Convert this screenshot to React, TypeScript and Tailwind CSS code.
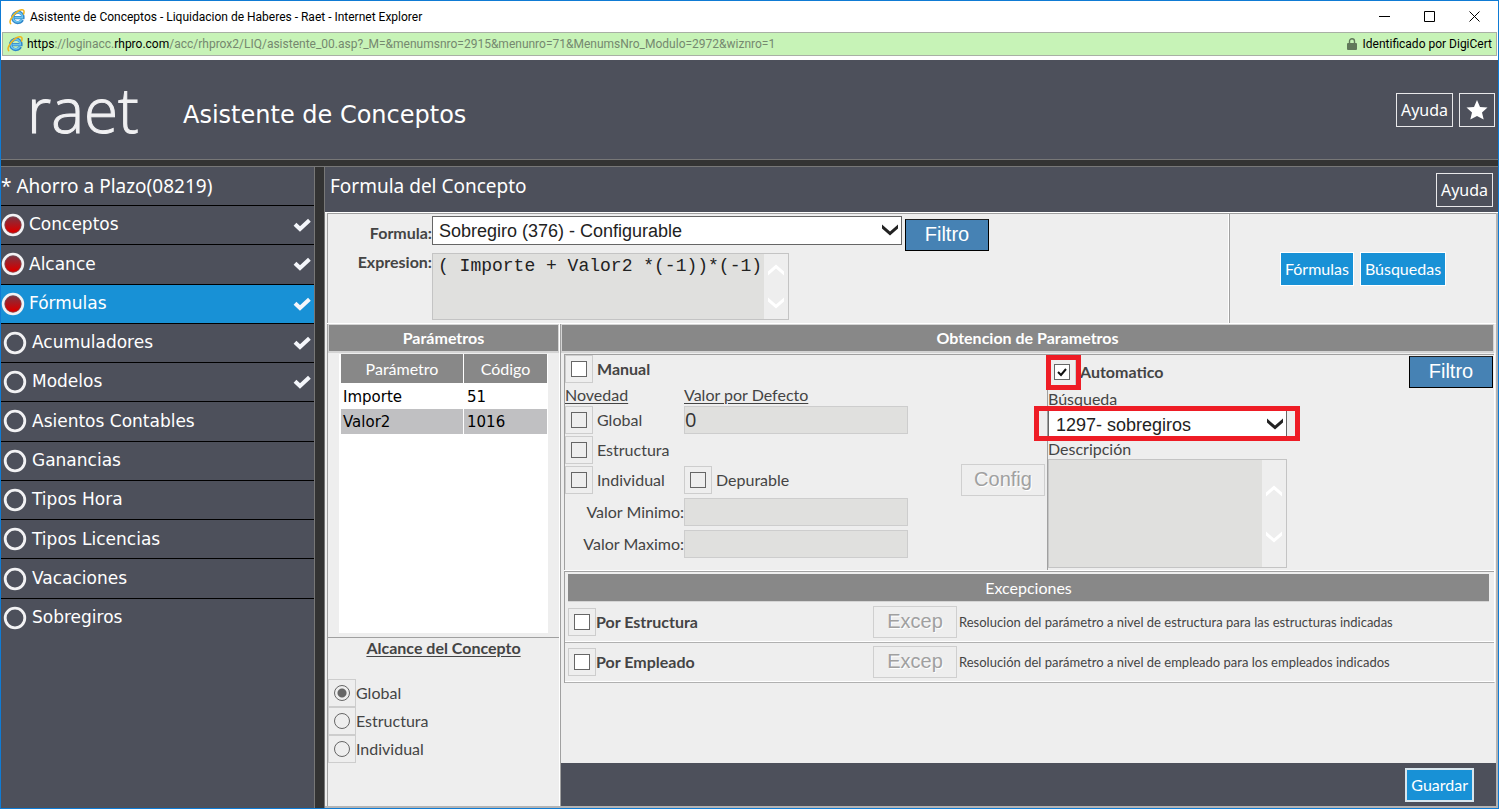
import React, { useState } from "react";

// Itens do menu lateral do assistente
interface Paso {
  nombre: string;
  visitado: boolean;
  completo: boolean;
}

const pasos: Paso[] = [
  { nombre: "Conceptos", visitado: true, completo: true },
  { nombre: "Alcance", visitado: true, completo: true },
  { nombre: "Fórmulas", visitado: true, completo: true },
  { nombre: "Acumuladores", visitado: false, completo: true },
  { nombre: "Modelos", visitado: false, completo: true },
  { nombre: "Asientos Contables", visitado: false, completo: false },
  { nombre: "Ganancias", visitado: false, completo: false },
  { nombre: "Tipos Hora", visitado: false, completo: false },
  { nombre: "Tipos Licencias", visitado: false, completo: false },
  { nombre: "Vacaciones", visitado: false, completo: false },
  { nombre: "Sobregiros", visitado: false, completo: false },
];

const parametros = [
  { nombre: "Importe", codigo: "51" },
  { nombre: "Valor2", codigo: "1016" },
];

const IconoExplorer = () => (
  <svg viewBox="0 0 16 16" className="h-4 w-4 shrink-0" aria-hidden="true">
    <path
      d="M13.4 10.8A5.2 5.2 0 1 1 14 8.7H5"
      fill="none"
      stroke="#2f86c9"
      strokeWidth="3.2"
    />
    <path
      d="M12.8 10.6A4.8 4.8 0 1 1 13.4 8.6H5.4"
      fill="none"
      stroke="#6cc4ee"
      strokeWidth="1.6"
    />
    <path
      d="M2.200 15C-.6 13.800 2 7.600 7 3.600 11 .4 15.400-.4 15 3.200c0 .8-.3 1.600-.8 2.300"
      fill="none"
      stroke="#f0b51c"
      strokeWidth="1.5"
    />
  </svg>
);

const Flecha = ({ className }: { className: string }) => (
  <svg viewBox="0 0 16 12" className={className} aria-hidden="true">
    <path d="M0 0.5 8 7.5 16 0.5V4.5L8 11.5 0 4.5Z" fill="currentColor" />
  </svg>
);

const Tilde = () => (
  <svg viewBox="0 0 18 14" className="h-[14px] w-[18px]" aria-hidden="true">
    <path
      d="M2 6.2 7 11 16.4 2.2"
      fill="none"
      stroke="#f4f6fb"
      strokeWidth="4"
    />
  </svg>
);

// Círculo de estado de cada paso
const Circulo = ({ lleno }: { lleno: boolean }) => (
  <svg viewBox="0 0 24 24" className="h-6 w-6 shrink-0" aria-hidden="true">
    <defs>
      <linearGradient id="rojo" x1="0" y1="0" x2="0" y2="1">
        <stop offset="0.15" stopColor="#842f3c" />
        <stop offset="0.8" stopColor="#d40000" />
      </linearGradient>
    </defs>
    <circle
      cx="12"
      cy="12"
      r="9.8"
      fill={lleno ? "url(#rojo)" : "none"}
      stroke="#f2f2f4"
      strokeWidth="2.8"
    />
    {lleno && (
      <circle cx="12" cy="12" r="8.2" fill="none" stroke="#6a5a63" strokeWidth="0.6" />
    )}
  </svg>
);

interface CasillaProps {
  id: string;
  inactiva?: boolean;
  marcada?: boolean;
}

const Casilla = ({ id, inactiva, marcada }: CasillaProps) => (
  <span className="relative flex h-7 w-7 shrink-0 items-center justify-center border border-[#cdcdcd]">
    <input
      id={id}
      type="checkbox"
      defaultChecked={marcada}
      disabled={inactiva}
      className="peer h-4 w-4 appearance-none border border-[#666] bg-white disabled:bg-[#eee]"
    />
    <svg
      viewBox="0 0 16 16"
      className="pointer-events-none absolute hidden h-4 w-4 peer-checked:block"
      aria-hidden="true"
    >
      <path d="M4 8 7 11 12 5" fill="none" stroke="#111" strokeWidth="2" />
    </svg>
  </span>
);

// Área de texto con barra de desplazamiento deshabilitada
const AreaTexto = ({
  id,
  valor,
  className,
  barra,
}: {
  id: string;
  valor: string;
  className: string;
  barra: string;
}) => (
  <div className={`flex border border-[#c4c4c4] bg-[#e0e0de] ${className}`}>
    <textarea
      id={id}
      readOnly
      defaultValue={valor}
      className="min-w-0 flex-1 resize-none overflow-hidden whitespace-nowrap px-[5px] font-['Liberation_Mono',monospace] text-[18px] leading-6 text-[#222] outline-none"
    />
    <div className={`flex w-6 flex-col items-center justify-center bg-[#eee] text-white ${barra}`}>
      <Flecha className="h-3 w-4 rotate-180" />
      <Flecha className="h-3 w-4" />
    </div>
  </div>
);

const BotonFiltro = () => (
  <button className="h-8 w-[84px] shrink-0 border border-t-[#222] border-black bg-[#4682b4] pb-[2px] font-['Liberation_Sans',sans-serif] text-xl leading-6 text-white">
    Filtro
  </button>
);

const BotonInactivo = ({ texto }: { texto: string }) => (
  <button
    disabled
    className="h-8 min-w-[84px] shrink-0 border border-[#cfcfcf] bg-[#eee] px-3 pb-[2px] font-['Liberation_Sans',sans-serif] text-xl leading-6 text-[#a0a0a0] [text-shadow:1px_1px_0_white]"
  >
    {texto}
  </button>
);

const BotonAyuda = () => (
  <button className="h-[34px] border border-[#e8e8ea] px-1 font-['Noto_Sans',sans-serif] text-base text-white">
    Ayuda
  </button>
);

const Ventana = () => (
  <>
    <div className="flex h-[31px] items-center bg-white pl-2 font-['Roboto',sans-serif] text-xs text-black">
      <IconoExplorer />
      <h1 className="ml-[5px] flex-1">
        Asistente de Conceptos - Liquidacion de Haberes - Raet - Internet
        Explorer
      </h1>
      <div className="flex items-center gap-[13px] pr-2">
        <button aria-label="Minimizar" className="flex h-6 w-8 items-center justify-center">
          <svg viewBox="0 0 11 11" className="h-[11px] w-[11px]">
            <path d="M0 5.5H11" stroke="#000" />
          </svg>
        </button>
        <button aria-label="Maximizar" className="flex h-6 w-8 items-center justify-center">
          <svg viewBox="0 0 11 11" className="h-[11px] w-[11px]">
            <path d="M.5.5H10.5V10.5H.5Z" fill="none" stroke="#000" />
          </svg>
        </button>
        <button aria-label="Cerrar" className="flex h-6 w-8 items-center justify-center">
          <svg viewBox="0 0 11 11" className="h-[11px] w-[11px]">
            <path d="M.5.5 10.5 10.5M10.5.5.5 10.5" stroke="#000" />
          </svg>
        </button>
      </div>
    </div>
    <div className="bg-white px-[1px] pb-1">
      <div className="flex h-6 items-center border border-[#a9b0a5] bg-[#c7f3b7] px-1 font-['Roboto',sans-serif] text-xs text-[#75886f]">
        <IconoExplorer />
        <p className="ml-1 flex-1 whitespace-nowrap">
          <span className="text-black">https</span>://loginacc.
          <span className="text-black">rhpro.com</span>
          /acc/rhprox2/LIQ/asistente_00.asp?_M=&amp;menumsnro=2915&amp;menunro=71&amp;MenumsNro_Modulo=2972&amp;wiznro=1
        </p>
        <svg viewBox="0 0 10 12" className="mr-[6px] h-3 w-[10px]" aria-hidden="true">
          <path d="M2.5 6V3.2a2.5 2.5 0 0 1 5 0V6" fill="none" stroke="#61785a" strokeWidth="1.4" />
          <rect y="5" width="10" height="7" rx="1" fill="#61785a" />
        </svg>
        <span className="text-black">Identificado por DigiCert</span>
      </div>
    </div>
  </>
);

const Encabezado = () => (
  <header className="flex h-[99px] items-center bg-[#4d505b] pr-[3px] text-white">
    <div className="w-[182px] pb-[2px] pl-[26px] font-['Open_Sans',sans-serif] text-[62px] leading-[72px] font-light text-[#f0f0f2] [-webkit-text-stroke:1px_#f0f0f2]">
      raet
    </div>
    <h2 className="flex-1 pt-[10px] font-['DejaVu_Sans',sans-serif] text-2xl">
      Asistente de Conceptos
    </h2>
    <div className="flex gap-[6px]">
      <BotonAyuda />
      <button
        aria-label="Favoritos"
        className="flex h-[34px] w-9 items-center justify-center border border-[#e8e8ea]"
      >
        <svg viewBox="0 0 24 24" className="h-6 w-6">
          <path
            d="M12 2 15 9 22.5 9.500 17 14.500 18.700 21.600 12 18 5.300 21.600 7 14.500 1.500 9.500 9 9Z"
            fill="#fff"
          />
        </svg>
      </button>
    </div>
  </header>
);

const Menu = ({
  activo,
  onElegir,
}: {
  activo: string;
  onElegir: (nombre: string) => void;
}) => (
  <aside className="w-[313px] shrink-0 bg-[#4d505b] text-white">
    <h3 className="flex h-[39px] items-center border-b border-black font-['Noto_Sans',sans-serif] text-[19px]">
      * Ahorro a Plazo(08219)
    </h3>
    <ul className="flex h-[431px] flex-col font-['DejaVu_Sans',sans-serif] text-[17px]">
      {pasos.map((paso) => (
        <li
          key={paso.nombre}
          className="flex-1 border-b border-black last:border-b-0"
        >
          <button
            onClick={() => onElegir(paso.nombre)}
            className={`flex h-full w-full items-center text-left ${
              activo === paso.nombre ? "bg-[#1891d6]" : ""
            } ${paso.visitado ? "gap-1" : "gap-[5px] pl-[2px]"}`}
          >
            <Circulo lleno={paso.visitado} />
            <span className="flex-1">{paso.nombre}</span>
            {paso.completo && (
              <span className="pr-[3px]">
                <Tilde />
              </span>
            )}
          </button>
        </li>
      ))}
    </ul>
  </aside>
);

const PanelFormula = () => (
  <section className="flex h-[110px] border-t border-l border-[#a0a0a0]">
    <div className="flex-1 border-r border-white pt-[2px]">
      <div className="flex items-start">
        <label htmlFor="formula" className="w-[104px] pt-[7px] text-right font-bold">
          Formula:
        </label>
        <div className="relative">
          <select
            id="formula"
            className="h-[29px] w-[470px] appearance-none border border-[#666] bg-white px-[6px] font-['Liberation_Sans',sans-serif] text-lg leading-6 text-[#222]"
          >
            <option>Sobregiro (376) - Configurable</option>
          </select>
          <Flecha className="pointer-events-none absolute top-2 right-1 h-3 w-4 text-[#222]" />
        </div>
        <div className="pt-[3px] pl-[3px]">
          <BotonFiltro />
        </div>
      </div>
      <div className="flex items-start pt-[2px]">
        <label htmlFor="expresion" className="w-[104px] text-right leading-[18px] font-bold">
          Expresion:
        </label>
        <AreaTexto
          id="expresion"
          valor="( Importe + Valor2 *(-1))*(-1)"
          className="h-[67px] w-[357px]"
          barra="gap-[21px]"
        />
      </div>
    </div>
    <div className="flex w-[267px] items-center justify-center gap-2 border-l border-[#a0a0a0] text-white">
      <button className="h-8 bg-[#1891d6] px-1 outline outline-white">Fórmulas</button>
      <button className="h-8 bg-[#1891d6] px-1 outline outline-white">Búsquedas</button>
    </div>
  </section>
);

const PanelParametros = () => {
  const [elegido, setElegido] = useState("Valor2");

  return (
    <section className="flex w-[233px] shrink-0 flex-col border-r border-l border-r-white border-l-[#a0a0a0]">
      <h4 className="flex h-[29px] items-center justify-center border border-b-2 border-[#d4d4d4] bg-[#888] font-bold text-white">
        Parámetros
      </h4>
      <div className="mx-[11px] mt-[1px] h-[279px] bg-white pl-[1px]">
        <table className="w-full border-separate border-spacing-x-[1px] border-spacing-y-0">
          <thead>
            <tr className="h-[30px] text-white">
              <th className="w-[122px] border-b border-white bg-[#888] font-normal">Parámetro</th>
              <th className="border-b border-white bg-[#888] font-normal">Código</th>
            </tr>
          </thead>
          <tbody className="font-['DejaVu_Sans',sans-serif] text-[15px] text-black">
            {parametros.map((p) => (
              <tr
                key={p.nombre}
                onClick={() => setElegido(p.nombre)}
                className={`h-[25px] ${elegido === p.nombre ? "bg-[#c0c0c2]" : "bg-white"}`}
              >
                <td className="pl-[2px]">{p.nombre}</td>
                <td className="pl-[3px]">{p.codigo}</td>
              </tr>
            ))}
          </tbody>
        </table>
      </div>
      <div
        role="radiogroup"
        aria-labelledby="alcance"
        className="mt-1 flex-1 border-t border-[#a0a0a0]"
      >
        <p id="alcance" className="text-center font-bold underline underline-offset-2">
          Alcance del Concepto
        </p>
        <div className="pt-[21px]">
          {["Global", "Estructura", "Individual"].map((alcance) => (
            <label key={alcance} className="flex items-center">
              <span className="flex h-7 w-7 items-center justify-center border border-[#cdcdcd]">
                <input
                  type="radio"
                  name="alcance"
                  defaultChecked={alcance === "Global"}
                  className="h-4 w-4 appearance-none rounded-full border border-[#666] checked:bg-[radial-gradient(circle,#666_4px,transparent_5px)]"
                />
              </span>
              {alcance}
            </label>
          ))}
        </div>
      </div>
    </section>
  );
};

const PanelManual = () => (
  <div className="w-[483px] shrink-0 border-l border-[#a0a0a0]">
    <div className="flex items-center gap-1">
      <Casilla id="manual" />
      <label htmlFor="manual" className="font-bold">Manual</label>
    </div>
    <div className="flex h-[23px] items-center underline underline-offset-2">
      <span className="w-[119px]">Novedad</span>
      <label htmlFor="defecto">Valor por Defecto</label>
    </div>
    <div className="flex flex-col gap-[2px]">
      <div className="flex items-center">
        <div className="flex w-[119px] items-center gap-1">
          <Casilla id="mglobal" inactiva />
          <label htmlFor="mglobal">Global</label>
        </div>
        <input
          id="defecto"
          defaultValue="0"
          disabled
          className="h-7 w-[224px] border border-[#cdcdcd] bg-[#e0e0de] font-['Open_Sans',sans-serif] text-xl text-[#333]"
        />
      </div>
      <div className="flex items-center gap-1">
        <Casilla id="mestructura" inactiva />
        <label htmlFor="mestructura">Estructura</label>
      </div>
      <div className="flex items-center">
        <div className="flex w-[119px] items-center gap-1">
          <Casilla id="mindividual" inactiva />
          <label htmlFor="mindividual">Individual</label>
        </div>
        <div className="flex flex-1 items-center gap-1">
          <Casilla id="depurable" inactiva />
          <label htmlFor="depurable">Depurable</label>
        </div>
        <div className="-my-1 pr-[2px]">
          <BotonInactivo texto="Config" />
        </div>
      </div>
    </div>
    <div className="flex flex-col gap-1 pt-1">
      <div className="flex items-center">
        <label htmlFor="minimo" className="w-[119px] text-right">Valor Minimo:</label>
        <input id="minimo" disabled className="h-7 w-[224px] border border-[#cdcdcd] bg-[#e0e0de]" />
      </div>
      <div className="flex items-center">
        <label htmlFor="maximo" className="w-[119px] text-right">Valor Maximo:</label>
        <input id="maximo" disabled className="h-7 w-[224px] border border-[#cdcdcd] bg-[#e0e0de]" />
      </div>
    </div>
  </div>
);

const PanelAutomatico = () => (
  <div className="min-w-0 flex-1 border-l border-[#a0a0a0] pr-[1px]">
    <div className="flex h-[34px] items-start pt-[1px]">
      <div className="relative flex flex-1 items-center gap-1 pt-[2px]">
        <Casilla id="automatico" marcada />
        <label htmlFor="automatico" className="font-bold">Automatico</label>
        {/* Resaltado rojo de la casilla */}
        <div className="pointer-events-none absolute -top-[1px] -left-[2px] h-[35px] w-[35px] border-[5px] border-[#ee1c25]" />
      </div>
      <BotonFiltro />
    </div>
    <label htmlFor="busqueda" className="block leading-5">Búsqueda</label>
    <div className="relative mt-[1px] w-[239px]">
      <select
        id="busqueda"
        className="block h-[29px] w-full appearance-none border border-[#666] bg-white px-[7px] font-['Liberation_Sans',sans-serif] text-lg leading-6 text-[#222]"
      >
        <option>1297- sobregiros</option>
      </select>
      <Flecha className="pointer-events-none absolute top-2 right-1 h-3 w-4 text-[#222]" />
      {/* Resaltado rojo de la búsqueda */}
      <div className="pointer-events-none absolute -top-1 -right-[13px] -bottom-[2px] -left-[14px] border-[5px] border-[#ee1c25]" />
    </div>
    <label htmlFor="descripcion" className="block leading-5">Descripción</label>
    <AreaTexto
      id="descripcion"
      valor=""
      className="h-[109px] w-[239px]"
      barra="gap-[34px]"
    />
  </div>
);

const excepciones = [
  {
    id: "porEstructura",
    titulo: "Por Estructura",
    detalle:
      "Resolucion del parámetro a nivel de estructura para las estructuras indicadas",
  },
  {
    id: "porEmpleado",
    titulo: "Por Empleado",
    detalle:
      "Resolución del parámetro a nivel de empleado para los empleados indicados",
  },
];

const PanelExcepciones = () => (
  <div className="border-t border-l border-[#a0a0a0] pt-[2px]">
    <h4 className="mr-[5px] ml-[3px] flex h-7 items-center justify-center border-b border-[#d4d4d4] bg-[#888] text-white">
      Excepciones
    </h4>
    {excepciones.map((e) => (
      <div
        key={e.id}
        className="flex h-10 items-center border-b border-white pl-[3px] shadow-[0_1px_0_#b0b0b0]"
      >
        <div className="flex w-[305px] items-center">
          <Casilla id={e.id} />
          <label htmlFor={e.id} className="font-bold">{e.titulo}</label>
        </div>
        <BotonInactivo texto="Excep" />
        <p className="pl-[2px] text-[13px]">{e.detalle}</p>
      </div>
    ))}
  </div>
);

const App = () => {
  const [activo, setActivo] = useState("Fórmulas");

  return (
    <div className="flex min-h-screen flex-col border border-[#0f7bd4] bg-[#4d505b]">
      <Ventana />
      <Encabezado />
      <div className="h-2 border-y border-[#777] bg-[#333]" />
      <div className="flex flex-1">
        <Menu activo={activo} onElegir={setActivo} />
        <div className="w-[11px] shrink-0 border-x border-[#777] bg-[#333]" />

        <main className="flex min-w-0 flex-1 flex-col border-r-2 border-b-2 border-[#b4b4b4] bg-[#eee] pl-[2px] font-['Lato',sans-serif] text-base leading-5 text-[#444]">
          <div className="-mr-[2px] -ml-[2px] flex h-[46px] items-center justify-between border-b border-white bg-[#4d505b] pr-[5px] pl-[5px]">
            <h3 className="pb-2 font-['Noto_Sans',sans-serif] text-[19px] text-white">
              Formula del Concepto
            </h3>
            <BotonAyuda />
          </div>
          <PanelFormula />
          <div className="flex flex-1 border-t border-white">
            <PanelParametros />
            <section className="flex min-w-0 flex-1 flex-col border-l border-[#a0a0a0]">
              <h4 className="mr-[2px] flex h-[29px] items-center justify-center border border-b-2 border-[#d4d4d4] bg-[#888] font-bold text-white">
                Obtencion de Parametros
              </h4>
              <div className="mr-[1px] ml-[3px] border-r border-b border-[#a0a0a0] border-r-white">
                <div className="mt-[1px] flex h-[217px] border-t border-b border-t-[#a0a0a0] border-b-white">
                  <PanelManual />
                  <PanelAutomatico />
                </div>
                <PanelExcepciones />
              </div>
              <div className="flex-1" />
              <footer className="flex h-[43px] items-center justify-end bg-[#4d505b] pr-[22px]">
                <button className="h-[34px] border-2 border-[#d8e6ee] bg-[#1891d6] px-1 text-white">
                  Guardar
                </button>
              </footer>
            </section>
          </div>
        </main>
      </div>
    </div>
  );
};

export default App;
